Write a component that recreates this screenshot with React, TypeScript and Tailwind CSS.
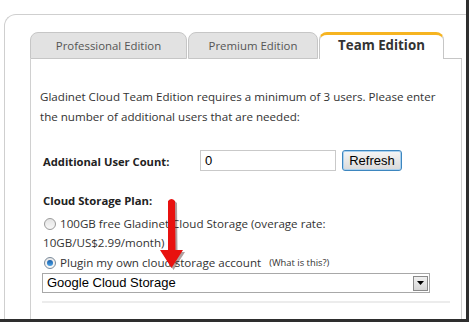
export default function App() {
  return (
    <div className="relative w-[472px] h-[324px] bg-white overflow-hidden font-['Open_Sans',sans-serif] text-[#333]">
      <div className="w-[469px] h-[322px] border-r-[3px] border-b-[3px] border-[#2e2e2e] pt-[14px] pl-[4px] flex flex-col">
        <div className="flex-1 border-t border-l border-[#cfcfcf] rounded-tl-[12px] pt-[17px] pl-[25px] pr-[4px] flex flex-col overflow-hidden">
          {/* tabs */}
          <div className="flex h-[27px] shrink-0">
            <div className="w-[157px] h-[27px] bg-[#e2e2e2] border border-[#c6c6c6] rounded-t-[8px] flex items-center justify-center text-[11.4px] text-[#555]">
              Professional Edition
            </div>
            <div className="ml-[1px] w-[130px] h-[27px] bg-[#e2e2e2] border border-[#c6c6c6] rounded-t-[8px] flex items-center justify-center text-[11.4px] text-[#555]">
              Premium Edition
            </div>
            <div className="ml-[1px] w-[125px] h-[27px] bg-white border-t-[3px] border-t-[#f6b420] border-x border-x-[#c6c6c6] rounded-t-[8px] flex items-center justify-center text-[13.3px] font-bold text-[#333] pb-[2px]">
              Team Edition
            </div>
            <div className="flex-1 border-b border-[#c6c6c6]"></div>
          </div>
          {/* content */}
          <div className="flex-1 border-l border-r border-[#d0d0d0] pl-[9px] pt-[28px]">
            <p className="text-[11.6px] leading-[20px] text-[#333]">
              Gladinet Cloud Team Edition requires a minimum of 3 users. Please enter
              <br />
              the number of additional users that are needed:
            </p>
            <div className="mt-[23px] flex items-center h-[21px]">
              <div className="w-[160px] pl-[3px] pt-[4px] text-[11.2px] font-bold text-[#222]">Additional User Count:</div>
              <div className="w-[136px] h-[21px] border border-[#c9c9c9] pl-[4px] flex items-center font-['Liberation_Sans',sans-serif] text-[13px] text-black">
                0
              </div>
              <div className="ml-[6px] w-[60px] h-[21px] border border-[#3d86bf] rounded-[3px] bg-gradient-to-b from-[#f6f6f6] to-[#d9d9d9] flex items-center justify-center font-['Liberation_Sans',sans-serif] text-[13px] text-black shadow-[inset_0_0_0_1px_#a9d0ee]">
                Refresh
              </div>
            </div>
            <div className="mt-[20px] pl-[3px] text-[11.3px] leading-[20px] font-bold text-[#222]">Cloud Storage Plan:</div>
            <div className="mt-[3px] text-[11.6px] leading-[19px]">
              <div className="flex items-center">
                <span className="ml-[4px] w-[12px] h-[12px] rounded-full border border-[#9a9a9a] bg-gradient-to-b from-[#e4e4e4] to-[#f8f8f8]"></span>
                <span className="ml-[4px]">100GB free Gladinet Cloud Storage (overage rate:</span>
              </div>
              <div className="pl-[3px]">10GB/US$2.99/month)</div>
            </div>
            <div className="mt-[1px] flex items-center text-[11.6px] leading-[20px]">
              <span className="ml-[4px] w-[12px] h-[12px] rounded-full border border-[#7a8a9a] bg-gradient-to-b from-[#e8e8e8] to-[#fafafa] flex items-center justify-center">
                <span className="w-[6px] h-[6px] rounded-full bg-gradient-to-b from-[#1b5ea8] to-[#4aa3e8]"></span>
              </span>
              <span className="ml-[4px]">Plugin my own cloud storage account</span>
              <span className="ml-[8px] text-[9.4px]">(What is this?)</span>
            </div>
            <div className="ml-[2px] w-[388px] h-[20px] border border-[#a8a8a8] flex items-center justify-between pl-[4px] pr-[1px] font-['Liberation_Sans',sans-serif] text-[13px] text-black">
              <span>Google Cloud Storage</span>
              <span className="w-[15px] h-[15px] border border-[#8a8a8a] bg-gradient-to-b from-[#f0f0f0] to-[#d6d6d6] flex items-center justify-center">
                <svg width="7" height="4" viewBox="0 0 7 4"><path d="M0 0h7L3.5 4z" fill="#000" /></svg>
              </span>
            </div>
            <div className="mt-[8px] ml-[2px] w-[408px] h-[2px] bg-[#ececec]"></div>
          </div>
        </div>
      </div>
      <svg className="absolute left-0 top-0 pointer-events-none" width="472" height="324" viewBox="0 0 472 324">
        <g transform="translate(2,2)" fill="#3a1010" opacity="0.4">
          <path d="M168 201 Q171.5 197 175 201 L175.5 250 L183 250 L171.5 268 L160 250 L168 250 Z" />
        </g>
        <path d="M168 201 Q171.5 197 175 201 L175.5 250 L183 250 L171.5 268 L160 250 L168 250 Z" fill="#e8110f" />
      </svg>
    </div>
  );
}
